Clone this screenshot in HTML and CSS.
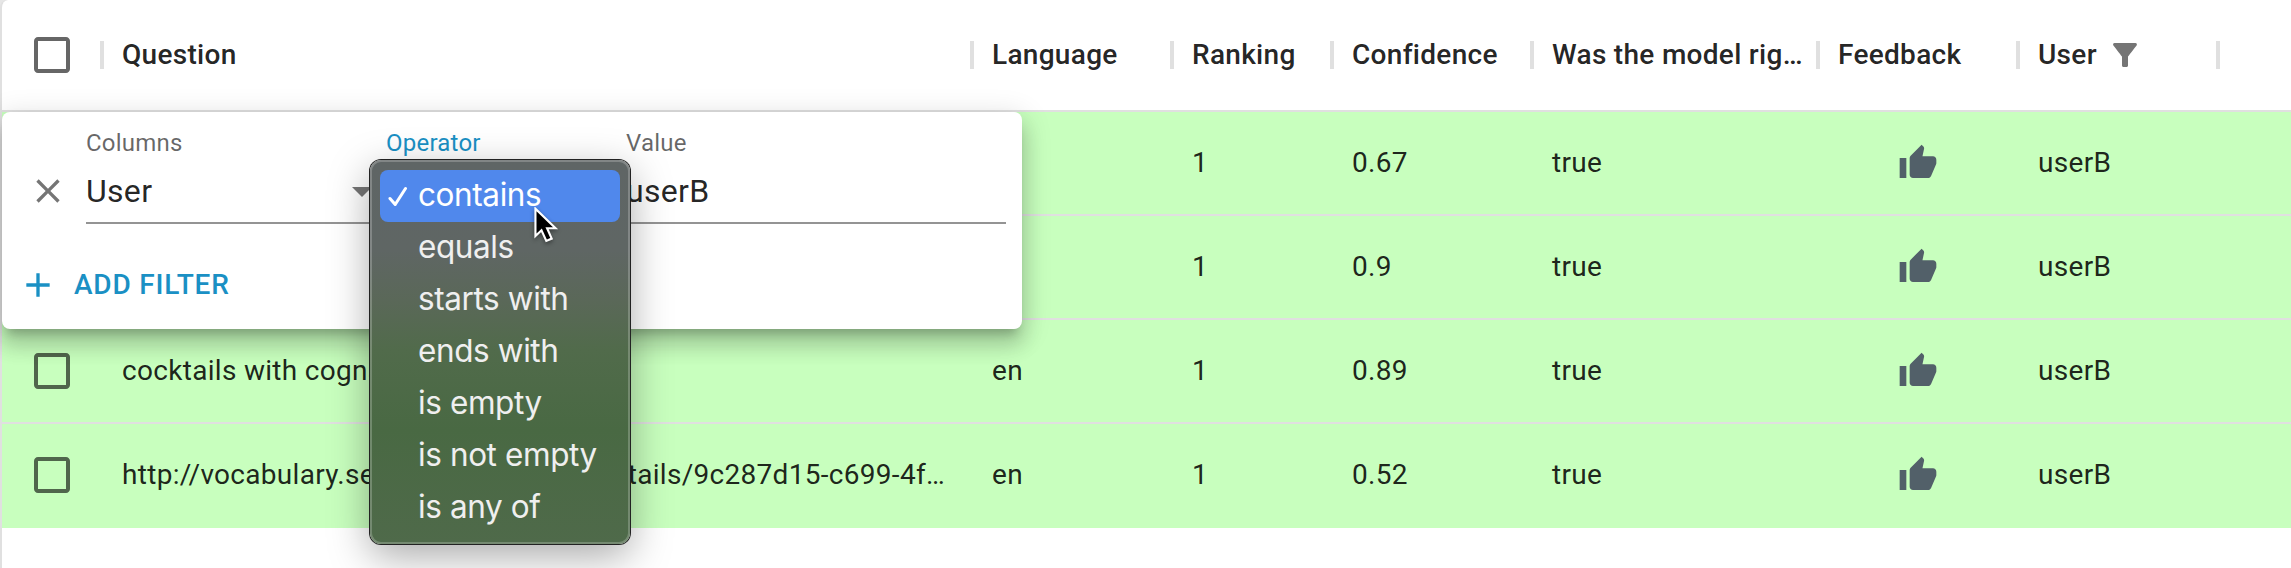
FILE: index.html
```html
<!DOCTYPE html>
<html lang="en">
<head>
<meta charset="utf-8">
<title>Feedback grid</title>
<link rel="stylesheet" href="styles.css">
</head>
<body>
<svg width="0" height="0" class="defs">
  <symbol id="box" viewBox="0 0 24 24"><path d="M19 5v14H5V5h14m0-2H5c-1.100 0-2 .9-2 2v14c0 1.100.9 2 2 2h14c1.100 0 2-.9 2-2V5c0-1.100-.9-2-2-2z"/></symbol>
  <symbol id="thumb" viewBox="0 0 24 24"><path d="M1 21h4V9H1v12zm22-11c0-1.100-.9-2-2-2h-6.310l.95-4.570.03-.32c0-.41-.17-.79-.44-1.060L14.170 1 7.590 7.590C7.220 7.950 7 8.450 7 9v10c0 1.100.9 2 2 2h9c.83 0 1.540-.5 1.840-1.220l3.020-7.050c.09-.23.14-.47.14-.73v-2z"/></symbol>
</svg>
<main class="grid">
  <div class="row head">
    <div class="check"><svg class="i48"><use href="#box"/></svg></div>
    <div class="cell">Question</div>
    <div class="cell">Language</div>
    <div class="cell">Ranking</div>
    <div class="cell">Confidence</div>
    <div class="cell">Was the model rig…</div>
    <div class="cell">Feedback</div>
    <div class="cell">User<svg class="funnel" viewBox="0 0 24 24"><path d="M4.250 5.610C6.270 8.200 10 13 10 13v6c0 .55.45 1 1 1h2c.55 0 1-.45 1-1v-6s3.720-4.800 5.740-7.390c.51-.66.04-1.610-.79-1.610H5.040c-.83 0-1.300.95-.79 1.610z"/></svg></div>
    <div class="cell rest"></div>
  </div>
  <div class="row">
    <div class="check"></div><div class="cell"></div><div class="cell"></div>
    <div class="cell">1</div><div class="cell">0.67</div><div class="cell">true</div>
    <div class="cell center"><svg class="i40"><use href="#thumb"/></svg></div><div class="cell">userB</div>
  </div>
  <div class="row">
    <div class="check"></div><div class="cell"></div><div class="cell"></div>
    <div class="cell">1</div><div class="cell">0.9</div><div class="cell">true</div>
    <div class="cell center"><svg class="i40"><use href="#thumb"/></svg></div><div class="cell">userB</div>
  </div>
  <div class="row">
    <div class="check"><svg class="i48"><use href="#box"/></svg></div><div class="cell">cocktails with cognac</div><div class="cell">en</div>
    <div class="cell">1</div><div class="cell">0.89</div><div class="cell">true</div>
    <div class="cell center"><svg class="i40"><use href="#thumb"/></svg></div><div class="cell">userB</div>
  </div>
  <div class="row last">
    <div class="check"><svg class="i48"><use href="#box"/></svg></div><div class="cell split"><span>http://vocabulary.se</span><span>tails/9c287d15-c699-4f…</span></div><div class="cell">en</div>
    <div class="cell">1</div><div class="cell">0.52</div><div class="cell">true</div>
    <div class="cell center"><svg class="i40"><use href="#thumb"/></svg></div><div class="cell">userB</div>
  </div>
</main>

<section class="panel">
  <div class="form">
    <svg class="i40 close" viewBox="0 0 24 24"><path d="M19 6.410 17.590 5 12 10.590 6.410 5 5 6.410 10.590 12 5 17.590 6.410 19 12 13.410 17.590 19 19 17.590 13.410 12z"/></svg>
    <div class="field columns"><label>Columns</label><div class="input">User<svg class="i48" viewBox="0 0 24 24"><path d="m7 10 5 5 5-5z"/></svg></div></div>
    <div class="field operator"><label>Operator</label><div class="input"></div></div>
    <div class="field value"><label>Value</label><div class="input">userB</div></div>
  </div>
  <div class="add"><svg class="i40" viewBox="0 0 24 24"><path d="M19 13h-6v6h-2v-6H5v-2h6V5h2v6h6v2z"/></svg>ADD FILTER</div>
</section>

<ul class="menu">
  <li class="selected"><svg class="tick" viewBox="0 0 20 22"><path d="M2 12.500 7.200 18.500 17.500 2.500"/></svg>contains</li>
  <li>equals</li>
  <li>starts with</li>
  <li>ends with</li>
  <li>is empty</li>
  <li>is not empty</li>
  <li>is any of</li>
</ul>
<svg class="cursor" viewBox="0 0 26 38"><path d="M1.500 1.500v28.500l6.300-6 5 11 5.600-2.400-4.800-10.800h8.800z"/></svg>
</body>
</html>
```
FILE: styles.css
```css
* { box-sizing: border-box; }
body {
  margin: 0;
  height: 568px;
  overflow: hidden;
  position: relative;
  background: #e6e6e6;
  font: 400 28px/40px Roboto, sans-serif;
  letter-spacing: 0.3px;
  color: rgba(0, 0, 0, 0.87);
}
svg { display: block; flex: none; fill: currentColor; }
.defs { position: absolute; }
.i48 { width: 48px; height: 48px; }
.i40 { width: 40px; height: 40px; }

.grid {
  height: 580px;
  border-left: 2px solid #e0e0e0;
  border-top-left-radius: 8px;
  background: #fff;
}
.row {
  display: grid;
  grid-template-columns: 100px 870px 200px 160px 200px 286px 200px 200px 1fr;
  height: 104px;
  border-bottom: 2px solid #e0e0e0;
  background: #c8ffbe;
}
.row.last { border-bottom: 0; padding-bottom: 2px; }
.head {
  height: 112px;
  background: none;
  font-weight: 500;
}
.cell, .check { display: flex; align-items: center; white-space: nowrap; }
.cell { padding: 0 20px; min-width: 0; }
.check { justify-content: center; color: rgba(0, 0, 0, 0.6); }
.center { justify-content: center; color: #526069; }
.split { justify-content: space-between; padding-right: 27px; }
.head .cell::before {
  content: "";
  width: 4px;
  height: 28px;
  margin: 0 18px 0 -22px;
  background: #e0e0e0;
  flex: none;
}
.funnel { width: 36px; height: 36px; margin-left: 10px; color: #757575; }

.panel {
  position: absolute;
  left: 2px;
  top: 112px;
  width: 1020px;
  height: 217px;
  border-radius: 8px;
  background: #fff;
  box-shadow: 0 10px 10px -6px rgba(0, 0, 0, 0.2), 0 16px 20px 2px rgba(0, 0, 0, 0.14), 0 6px 28px 4px rgba(0, 0, 0, 0.12);
}
.form { display: flex; height: 128px; padding: 16px 16px 16px 26px; }
.close { margin: 43px 18px 0 0; color: #757575; }
.field { display: flex; flex-direction: column; }
.field label {
  height: 32px;
  padding-top: 3px;
  font-size: 24px;
  line-height: 24px;
  letter-spacing: 0.225px;
  color: rgba(0, 0, 0, 0.6);
}
.input {
  display: flex;
  justify-content: space-between;
  align-items: center;
  height: 64px;
  border-bottom: 2px solid #949494;
  font-size: 32px;
}
.input svg { color: #757575; }
.columns { width: 300px; }
.operator { width: 240px; }
.operator label { color: #1a90c4; }
.value { width: 380px; }
.add {
  display: flex;
  align-items: center;
  gap: 16px;
  height: 90px;
  padding-left: 16px;
  font-weight: 500;
  letter-spacing: 0.8px;
  color: #1a90c4;
}

.menu {
  position: absolute;
  left: 370px;
  top: 160px;
  width: 260px;
  height: 384px;
  margin: 0;
  padding: 10px;
  list-style: none;
  border-radius: 11px;
  background: linear-gradient(#5f6565 0, #5f6664 90px, #5a6858 142px, #516b4b 190px, #496943 270px, #4f6a4a 384px);
  box-shadow: inset 0 0 0 2px rgba(255, 255, 255, 0.22), 0 0 0 1px #222, 0 12px 40px rgba(0, 0, 0, 0.34);
  font: 400 31.5px/49px Inter, sans-serif;
  letter-spacing: -0.4px;
  color: #efefef;
}
.menu li {
  position: relative;
  height: 52px;
  padding-left: 38px;
  border-radius: 8px;
  white-space: nowrap;
}
.menu .selected { background: #5088ec; color: #fff; }
.tick {
  position: absolute;
  left: 8px;
  top: 16px;
  width: 20px;
  height: 22px;
  fill: none;
  stroke: currentColor;
  stroke-width: 3;
  stroke-linecap: round;
  stroke-linejoin: round;
}
.cursor {
  position: absolute;
  left: 534px;
  top: 207px;
  width: 25px;
  height: 37px;
  fill: #000;
  stroke: #fff;
  stroke-width: 2.2;
  filter: drop-shadow(0 2px 2px rgba(0, 0, 0, 0.4));
}
```
